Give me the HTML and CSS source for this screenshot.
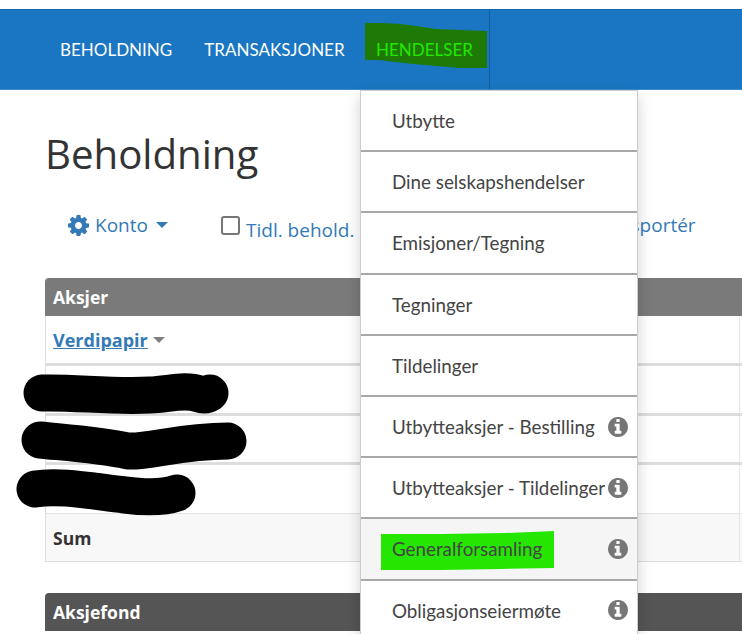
FILE: index.html
```html
<!DOCTYPE html>
<html lang="no">
<head>
<meta charset="utf-8">
<title>Beholdning</title>
<link rel="stylesheet" href="styles.css">
</head>
<body>
<svg width="0" height="0" class="defs" aria-hidden="true">
  <symbol id="info" viewBox="0 0 1536 1536"><path transform="translate(-128 -128)" d="M1152 1376v-160q0-14-9-23t-23-9h-96v-512q0-14-9-23t-23-9h-320q-14 0-23 9t-9 23v160q0 14 9 23t23 9h96v320h-96q-14 0-23 9t-9 23v160q0 14 9 23t23 9h448q14 0 23-9t9-23zm-128-896v-160q0-14-9-23t-23-9h-192q-14 0-23 9t-9 23v160q0 14 9 23t23 9h192q14 0 23-9t9-23zm640 416q0 209-103 385.5t-279.5 279.5-385.5 103-385.5-103-279.5-279.5-103-385.5 103-385.5 279.5-279.5 385.5-103 385.5 103 279.5 279.5 103 385.5z"/></symbol>
</svg>

<nav class="topnav">
  <a class="navlink">BEHOLDNING</a>
  <a class="navlink">TRANSAKSJONER</a>
  <a class="navlink navlink-active">HENDELSER</a>
  <svg class="mark-nav" width="128" height="50" viewBox="0 0 128 50"><path d="M1 1 L18 1 L36 2 L52 4 L72 7 L123 9 L123 46 L95 46 L72 44 L50 42 L30 40 L15 38 L1 38 Z" fill="#1f7a05"/></svg>
  <span class="navlabel-top">HENDELSER</span>
</nav>

<main class="page">
  <h1 class="title">Beholdning</h1>
  <div class="toolbar">
    <a class="tool tool-konto">
      <svg class="gear" viewBox="0 0 1536 1536" width="21" height="21"><path transform="translate(-128 -128)" d="M1152 896q0-106-75-181t-181-75-181 75-75 181 75 181 181 75 181-75 75-181zm512-109v222q0 12-8 23t-20 13l-185 28q-19 54-39 91 35 50 107 138 10 12 10 25t-9 23q-27 37-99 108t-94 71q-12 0-26-9l-138-108q-44 23-91 38-16 136-29 186-7 28-36 28h-222q-14 0-24.5-8.5t-11.5-21.5l-28-184q-49-16-90-37l-141 107q-10 9-25 9-14 0-25-11-126-114-165-168-7-10-7-23 0-12 8-23 15-21 51-66.5t54-70.5q-27-50-41-99l-183-27q-13-2-21-12.5t-8-23.5v-222q0-12 8-23t19-13l186-28q14-46 39-92-40-57-107-138-10-12-10-24 0-10 9-23 26-36 98.5-107.5t94.5-71.5q13 0 26 10l138 107q44-23 91-38 16-136 29-186 7-28 36-28h222q14 0 24.5 8.5t11.5 21.5l28 184q49 16 90 37l142-107q9-9 24-9 13 0 25 10 129 119 165 170 7 8 7 22 0 12-8 23-15 21-51 66.5t-54 70.5q26 50 41 98l183 28q13 2 21 12.5t8 23.5z"/></svg>
      <span>Konto</span>
      <span class="caret caret-blue"></span>
    </a>
    <label class="tool tool-check"><span class="checkbox"></span><span class="check-text">Tidl. behold.</span></label>
    <a class="tool tool-export">Eksportér</a>
  </div>

  <section class="panel">
    <h2 class="panel-head">Aksjer</h2>
    <div class="row row-head"><a class="sort">Verdipapir</a><span class="caret caret-grey"></span></div>
    <div class="row row-body"></div>
    <div class="row row-body row-mid"></div>
    <div class="row row-body row-last"></div>
    <div class="row row-sum">Sum</div>
  </section>

  <section class="panel panel-fund">
    <h2 class="panel-head panel-head-dark">Aksjefond</h2>
  </section>
</main>

<svg class="scribbles" width="260" height="150" viewBox="0 0 260 150" aria-hidden="true">
  <path d="M42 20 C75 19 110 24 150 22 C170 21 185 16 199 21 C205 23 207 22 210 20" />
  <path class="thick" d="M40 67 C70 70 100 72 128 78 C150 79 180 68 228 68" />
  <path d="M35 116 C60 112 90 118 125 122 C140 124 160 126 177 120" />
</svg>

<ul class="dropdown">
  <li class="item"><a>Utbytte</a></li>
  <li class="item"><a>Dine selskapshendelser</a></li>
  <li class="item"><a>Emisjoner/Tegning</a></li>
  <li class="item"><a>Tegninger</a></li>
  <li class="item"><a>Tildelinger</a></li>
  <li class="item"><a>Utbytteaksjer - Bestilling</a><svg class="info"><use href="#info"/></svg></li>
  <li class="item"><a>Utbytteaksjer - Tildelinger</a><svg class="info"><use href="#info"/></svg></li>
  <li class="item item-hover"><svg class="mark-item" width="175" height="41" viewBox="0 0 175 41"><path d="M1 4 L60 4 L125 3 L174 1 L174 38 L120 39 L60 40 L1 40 Z" fill="#25e600"/></svg><a>Generalforsamling</a><svg class="info"><use href="#info"/></svg></li>
  <li class="item"><a>Obligasjonseiermøte</a><svg class="info"><use href="#info"/></svg></li>
</ul>
</body>
</html>
```

FILE: styles.css
```css
* { box-sizing: border-box; }
html, body { margin: 0; height: 634px; overflow: hidden; background: #fff; }
body { position: relative; font-family: "Open Sans", sans-serif; color: #333; }
.defs { position: absolute; }

.topnav {
  position: relative;
  margin-top: 9px;
  height: 81px;
  background: #1a76c2;
  border-top: 1px solid #1368ad;
  border-bottom: 1px solid #3c8ccd;
  display: flex;
  align-items: center;
  gap: 32px;
  padding: 0 0 0 60px;
  font-family: Lato, sans-serif;
  font-size: 17px;
}
.topnav::after {
  content: "";
  position: absolute;
  left: 489px;
  top: 0;
  bottom: 0;
  width: 1px;
  background: #135d9b;
}
.navlink { color: #fff; white-space: nowrap; }
.navlink-active { visibility: hidden; }
.mark-nav { position: absolute; left: 364px; top: 12px; }
.navlabel-top { position: absolute; left: 376px; color: #22e800; }

.page { padding: 0 0 0 45px; width: 760px; }
.title {
  margin: 36px 0 0 0;
  font-size: 40.2px;
  line-height: 56px;
  font-weight: 400;
  color: #333;
}
.toolbar {
  display: flex;
  align-items: center;
  height: 40px;
  margin-top: 23px;
  padding-left: 23px;
  font-size: 19px;
  color: #337ab7;
}
.tool { display: flex; align-items: center; color: #337ab7; }
.tool-konto { gap: 6px; width: 153px; }
.gear { fill: #337ab7; }
.caret { display: inline-block; width: 0; height: 0; border-style: solid; border-color: transparent; border-width: 6px 6px 0; }
.caret-blue { border-top-color: #337ab7; margin-left: 2px; }
.caret-grey { border-top-color: #808080; margin-left: 5px; }
.tool-check { gap: 6px; width: 389px; }
.checkbox { width: 19px; height: 19px; border: 2px solid #767676; border-radius: 3px; background: #fff; margin-top: 1px; }
.check-text { margin-top: 9px; white-space: nowrap; }
.tool-export { white-space: nowrap; }

.panel { width: 715px; }
.panel:first-of-type { margin-top: 33px; }
.panel-head {
  margin: 0;
  height: 38px;
  padding: 0 8px;
  background: #7a7a7a;
  border-radius: 4px 4px 0 0;
  color: #fff;
  font-size: 17.5px;
  font-weight: 700;
  line-height: 38px;
}
.panel-head-dark { background: #555; }
.panel-fund { margin-top: 31px; }
.row {
  border-left: 1px solid #ddd;
  border-right: 1px solid #ddd;
  padding: 0 7px;
  display: flex;
  align-items: center;
  position: relative;
}
.row::after {
  content: "";
  position: absolute;
  left: 693px;
  top: 0;
  bottom: 0;
  width: 1px;
  background: #e6e6e6;
}
.row-head { height: 50px; border-bottom: 3px solid #ddd; }
.sort { color: #337ab7; font-weight: 700; font-size: 18px; text-decoration: underline; }
.row-body { height: 50px; border-bottom: 3px solid #ddd; }
.row-mid { height: 49px; }
.row-last { height: 49px; border-bottom: 1px solid #e4e4e4; }
.row-sum { height: 48px; background: #f8f8f8; border-bottom: 1px solid #ddd; font-weight: 700; font-size: 17.5px; color: #333; }

.scribbles {
  position: absolute;
  left: 0;
  top: 373px;
  fill: none;
  stroke: #000;
  stroke-width: 37px;
  stroke-linecap: round;
  stroke-linejoin: round;
}

.dropdown {
  position: absolute;
  left: 360px;
  top: 90px;
  width: 278px;
  margin: 0;
  padding: 0;
  list-style: none;
  background: #fff;
  border: 1px solid #ccc;
  border-bottom: 0;
  box-shadow: 0 6px 14px rgba(0, 0, 0, .18);
  font-family: Lato, sans-serif;
  font-size: 18.8px;
  color: #444;
}
.item {
  position: relative;
  height: 61.2px;
  padding: 0 0 0 31px;
  display: flex;
  align-items: center;
  justify-content: space-between;
  border-bottom: 2px solid #a8a8a8;
}
.item a { position: relative; white-space: nowrap; }
.item-hover { background: #f5f5f5; }
.mark-item { position: absolute; left: 19px; top: 11px; }
.info { position: absolute; left: 247px; top: 50%; margin-top: -10px; width: 20px; height: 20px; fill: #767676; }
```
